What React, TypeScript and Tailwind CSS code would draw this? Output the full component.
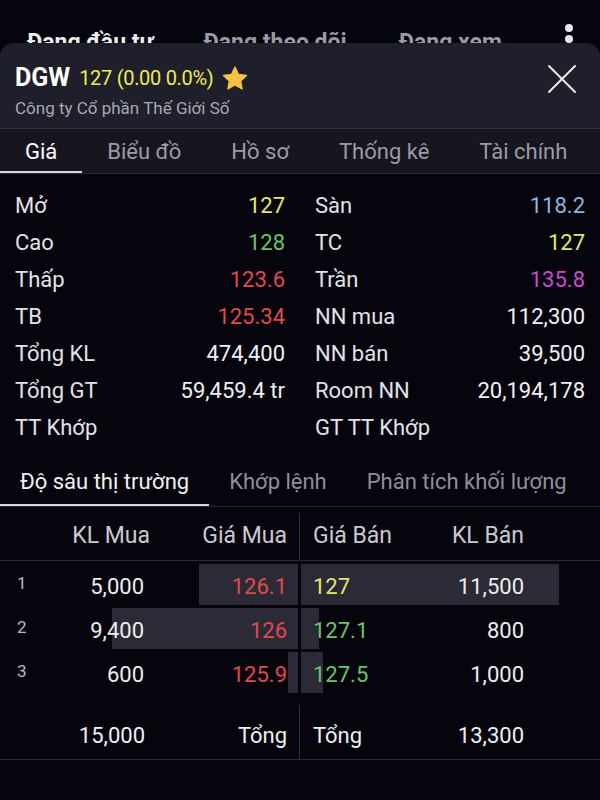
import React from "react";

const YEL = "text-[#e5e56a]";
const GRN = "text-[#6cc36a]";
const RED = "text-[#e04a4f]";
const BLU = "text-[#8db7d8]";
const MAG = "text-[#c84bd0]";
const WHT = "text-[#f0f0f2]";

const info: [string, string, string, string, string, string][] = [
  ["Mở", "127", YEL, "Sàn", "118.2", BLU],
  ["Cao", "128", GRN, "TC", "127", YEL],
  ["Thấp", "123.6", RED, "Trần", "135.8", MAG],
  ["TB", "125.34", RED, "NN mua", "112,300", WHT],
  ["Tổng KL", "474,400", WHT, "NN bán", "39,500", WHT],
  ["Tổng GT", "59,459.4 tr", WHT, "Room NN", "20,194,178", WHT],
  ["TT Khớp", "", WHT, "GT TT Khớp", "", WHT],
];

const rows = [
  { i: 1, kl: "5,000", gm: "126.1", gb: "127", gbc: YEL, klb: "11,500", bw: 99, sw: 258 },
  { i: 2, kl: "9,400", gm: "126", gb: "127.1", gbc: GRN, klb: "800", bw: 186, sw: 18 },
  { i: 3, kl: "600", gm: "125.9", gb: "127.5", gbc: GRN, klb: "1,000", bw: 10, sw: 22 },
];

function Star() {
  return (
    <svg width="28" height="27" viewBox="0 0 24 24" className="ml-[7px]">
      <path
        d="M12 1.8l3.1 6.6 7.1.9-5.2 4.9 1.3 7.1L12 17.8l-6.3 3.5L7 14.2 1.8 9.3l7.1-.9z"
        fill="#f5c242"
        stroke="#f5c242"
        strokeWidth="1.2"
        strokeLinejoin="round"
      />
    </svg>
  );
}

function CloseIcon() {
  return (
    <svg width="30" height="30" viewBox="0 0 30 30">
      <path d="M2 2L28 28M28 2L2 28" stroke="#ececf0" strokeWidth="2" strokeLinecap="round" />
    </svg>
  );
}

export default function App() {
  return (
    <div className="w-[600px] h-[800px] overflow-hidden bg-[#05050e] [font-family:Roboto,'Noto_Sans',sans-serif]">
      {/* background top tabs (covered by sheet) */}
      <div className="h-[43px] overflow-hidden flex items-start pt-[31px] relative">
        <div className="flex text-[23px] font-bold leading-[23px] whitespace-nowrap">
          <span className="ml-[27px] text-[#ededf0]">Đang đầu tư</span>
          <span className="ml-[50px] text-[#9a9aa5]">Đang theo dõi</span>
          <span className="ml-[52px] text-[#9a9aa5]">Đang xem</span>
        </div>
        <div className="absolute left-[565px] top-[24px] flex flex-col gap-[3px]">
          <span className="w-[8px] h-[8px] rounded-full bg-[#e8e8ec]" />
          <span className="w-[8px] h-[8px] rounded-full bg-[#e8e8ec]" />
          <span className="w-[8px] h-[8px] rounded-full bg-[#e8e8ec]" />
        </div>
      </div>

      {/* sheet */}
      <div className="rounded-t-[14px] overflow-hidden">
        <div className="bg-[#1f1e2b] h-[85px] flex items-start justify-between pl-[15px] pr-[23px]">
          <div className="pt-[20px]">
            <div className="flex items-center h-[30px]">
              <span className="text-[25px] font-bold text-white leading-[30px]">DGW</span>
              <span className="ml-[9px] text-[20px] text-[#ecec55] leading-[30px] tracking-[-0.3px]">127 (0.00 0.0%)</span>
              <Star />
            </div>
            <div className="text-[17px] text-[#a9a9b4] leading-[20px] mt-[5px]">Công ty Cổ phần Thế Giới Số</div>
          </div>
          <div className="pt-[21px]">
            <CloseIcon />
          </div>
        </div>
        <div className="h-px bg-[#33323f]" />
        <div className="bg-[#17161f] h-[45px] flex border-b border-[#2a2935] text-[22px] leading-[45px] whitespace-nowrap">
          <div className="px-[25px] text-white border-b-2 border-[#d5d5dc]">Giá</div>
          <div className="px-[25px] text-[#9b9ba6]">Biểu đồ</div>
          <div className="px-[25px] text-[#9b9ba6]">Hồ sơ</div>
          <div className="px-[25px] text-[#9b9ba6]">Thống kê</div>
          <div className="px-[25px] text-[#9b9ba6]">Tài chính</div>
        </div>

        <div className="bg-[#06050e]">
          {/* info grid */}
          <div className="grid grid-cols-2 pt-[13px] pb-[13px] text-[22px]">
            {info.map((r) => (
              <React.Fragment key={r[0]}>
                <div className="flex justify-between items-center h-[37px] px-[15px] whitespace-nowrap">
                  <span className="text-[#e2e2e8]">{r[0]}</span>
                  <span className={r[2]}>{r[1]}</span>
                </div>
                <div className="flex justify-between items-center h-[37px] px-[15px] whitespace-nowrap">
                  <span className="text-[#e2e2e8]">{r[3]}</span>
                  <span className={r[5]}>{r[4]}</span>
                </div>
              </React.Fragment>
            ))}
          </div>

          {/* second tabs */}
          <div className="flex h-[48px] border-b border-[#25242f] text-[22px] leading-[46px] whitespace-nowrap overflow-hidden">
            <div className="px-[20px] text-[#f0f0f2] border-b-2 border-[#d5d5dc]">Độ sâu thị trường</div>
            <div className="px-[20px] text-[#8f8f9a]">Khớp lệnh</div>
            <div className="px-[20px] text-[#8f8f9a]">Phân tích khối lượng</div>
          </div>

          {/* table header */}
          <div className="flex h-[54px] border-b border-[#2a2935] text-[23px] text-[#c9c9d0]">
            <div className="w-[298px] flex items-center pt-[5px]">
              <div className="w-[150px] text-right">KL Mua</div>
              <div className="flex-1 text-right pr-[11px]">Giá Mua</div>
            </div>
            <div className="w-[3px] flex justify-center pt-[6px]">
              <div className="w-px h-full bg-[#2e2d39]" />
            </div>
            <div className="flex-1 flex items-center justify-between pl-[12px] pr-[76px] pt-[5px]">
              <span>Giá Bán</span>
              <span>KL Bán</span>
            </div>
          </div>

          {/* rows */}
          {rows.map((r) => (
            <div key={r.i} className="flex h-[44px] text-[22px]">
              <div className="w-[298px] relative flex items-center pt-[6px]">
                <div className="absolute right-0 top-[3px] bottom-0 bg-[#2b2a36]" style={{ width: r.bw }} />
                <div className="relative w-[40px] pl-[17px] pb-[4px] text-[17px] text-[#b9b9c2]">{r.i}</div>
                <div className="relative w-[104px] text-right text-[#ededf0]">{r.kl}</div>
                <div className={`relative flex-1 text-right pr-[11px] ${RED}`}>{r.gm}</div>
              </div>
              <div className="w-[3px]" />
              <div className="flex-1 relative flex items-center justify-between pl-[12px] pr-[76px] pt-[6px]">
                <div className="absolute left-0 top-[3px] bottom-0 bg-[#2b2a36]" style={{ width: r.sw }} />
                <span className={`relative ${r.gbc}`}>{r.gb}</span>
                <span className="relative text-[#ededf0]">{r.klb}</span>
              </div>
            </div>
          ))}

          {/* totals */}
          <div className="flex h-[55px] mt-[12px] border-b border-[#2a2935] text-[22px] text-[#f0f0f2]">
            <div className="w-[298px] flex items-center pt-[6px]">
              <div className="w-[145px] text-right">15,000</div>
              <div className="flex-1 text-right pr-[11px]">Tổng</div>
            </div>
            <div className="w-[3px] flex justify-center">
              <div className="w-px h-full bg-[#2e2d39]" />
            </div>
            <div className="flex-1 flex items-center justify-between pl-[12px] pr-[76px] pt-[6px]">
              <span>Tổng</span>
              <span>13,300</span>
            </div>
          </div>
          <div className="h-[40px]" />
        </div>
      </div>
    </div>
  );
}
